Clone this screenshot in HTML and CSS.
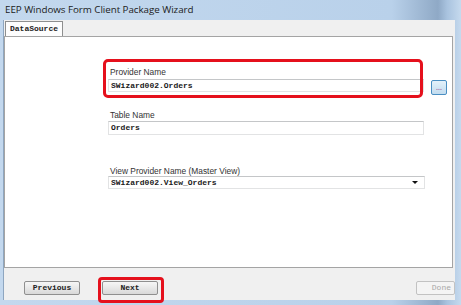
FILE: index.html
```html
<!DOCTYPE html>
<html lang="en">
<head>
    <meta charset="UTF-8">
    <title>EEP Windows Form Client Package Wizard</title>
    <link rel="stylesheet" href="styles.css">
</head>
<body>
    <div class="window">
        <div class="titlebar">EEP Windows Form Client Package Wizard</div>

        <div class="client">
            <div class="tabs">
                <div class="tab">DataSource</div>
            </div>

            <div class="panel">
                <div class="fields">
                    <div class="group marked">
                        <label class="caption">Provider Name</label>
                        <div class="row">
                            <div class="textbox">SWizard002.Orders</div>
                            <button class="browse">...</button>
                        </div>
                    </div>

                    <div class="group table-group">
                        <label class="caption">Table Name</label>
                        <div class="textbox tall">Orders</div>
                    </div>

                    <div class="group view-group">
                        <label class="caption">View Provider Name (Master View)</label>
                        <div class="textbox combo">
                            <span>SWizard002.View_Orders</span>
                            <span class="arrow"></span>
                        </div>
                    </div>
                </div>
            </div>

            <div class="footer">
                <button class="btn">Previous</button>
                <button class="btn next">Next</button>
                <span class="spacer"></span>
                <button class="btn" disabled>Done</button>
            </div>
        </div>
    </div>
</body>
</html>
```

FILE: styles.css
```css
body {
    margin: 0;
    width: 461px;
    height: 305px;
    overflow: hidden;
    font-family: "Liberation Sans", Arial, sans-serif;
}
.window {
    box-sizing: border-box;
    width: 461px;
    height: 305px;
    padding: 0 6px 5px 4px;
    display: flex;
    flex-direction: column;
    background: linear-gradient(90deg, #c3d8ee 0%, #b9d1ea 85%, #8fa9c6 95%, #a9c3df 97%, #c6daee 100%);
}
.titlebar {
    height: 20px;
    line-height: 19px;
    padding-left: 1px;
    font-family: "Open Sans", "Noto Sans", sans-serif;
    font-size: 9.8px;
    color: #1b1b1b;
    letter-spacing: -0.05px;
}
.client {
    flex: 1;
    display: flex;
    flex-direction: column;
    background: #f0f0f0;
    border-left: 1px solid #8ea6c0;
    margin-left: -1px;
}
.tabs {
    height: 15px;
    padding: 1px 0 0 1px;
    display: flex;
}
.tab {
    width: 56px;
    height: 14px;
    line-height: 13px;
    text-align: center;
    background: #fdfdfd;
    border: 1px solid #8e8f8f;
    border-bottom: none;
    font-family: "Liberation Mono", monospace;
    font-size: 8px;
    font-weight: bold;
    color: #222;
    position: relative;
    z-index: 1;
}
.panel {
    height: 230px;
    background: #fff;
    border: 1px solid #a4a4a4;
    margin-right: 2px;
}
.fields {
    margin-left: 103px;
    padding-top: 30px;
    width: 316px;
}
.group {
    display: flex;
    flex-direction: column;
}
.caption {
    height: 10px;
    line-height: 10px;
    padding-left: 2px;
    font-size: 8.4px;
    color: #333;
    margin-bottom: 2px;
}
.row {
    display: flex;
    align-items: flex-start;
}
.textbox {
    box-sizing: border-box;
    width: 316px;
    height: 13px;
    line-height: 11px;
    padding-left: 2px;
    border: 1px solid #e2e3e4;
    border-top-color: #c4c6c8;
    font-family: "Liberation Mono", monospace;
    font-size: 8px;
    font-weight: bold;
    color: #1a1a1a;
    flex-shrink: 0;
}
.textbox.tall {
    height: 14px;
    line-height: 12px;
}
.table-group {
    margin-top: 15px;
}
.table-group .caption {
    margin-bottom: 1px;
}
.view-group {
    margin-top: 31px;
}
.view-group .caption {
    margin-bottom: 0;
}
.combo {
    width: 317px;
    display: flex;
    justify-content: space-between;
    align-items: center;
    padding-right: 6px;
}
.arrow {
    width: 0;
    height: 0;
    border-left: 3px solid transparent;
    border-right: 3px solid transparent;
    border-top: 3px solid #111;
}
.marked {
    position: relative;
}
.marked::after {
    content: "";
    position: absolute;
    left: -5px;
    top: -8px;
    width: 320px;
    height: 39px;
    box-sizing: border-box;
    border: 3px solid #e5101c;
    border-radius: 5px;
}
.browse {
    box-sizing: border-box;
    flex-shrink: 0;
    margin: 1px 0 0 7px;
    width: 16px;
    height: 15px;
    padding: 0;
    border: 1px solid #4a8ec2;
    border-radius: 2px;
    background: linear-gradient(#e4f1fa, #c2dcef);
    font-family: "Liberation Sans", sans-serif;
    font-size: 7px;
    font-weight: bold;
    line-height: 11px;
    color: #a878a6;
    overflow: hidden;
}
.footer {
    flex: 1;
    display: flex;
    align-items: flex-start;
    padding: 13px 0 0 20px;
}
.btn {
    box-sizing: border-box;
    width: 56px;
    height: 14px;
    padding: 0;
    border: 1px solid #8f8f8f;
    border-radius: 2px;
    background: linear-gradient(#f6f6f6 0%, #e8e8e8 50%, #d9d9d9 100%);
    font-family: "Liberation Mono", monospace;
    font-size: 8px;
    font-weight: bold;
    color: #222;
    line-height: 12px;
}
.next {
    margin-left: 22px;
    position: relative;
}
.next::after {
    content: "";
    position: absolute;
    left: -5px;
    top: -5px;
    width: 66px;
    height: 26px;
    box-sizing: border-box;
    border: 3px solid #e5101c;
    border-radius: 4px;
}
.spacer {
    flex: 1;
}
.btn:disabled {
    width: 39px;
    border-color: #c2c2c2;
    background: #f4f4f4;
    color: #a8a8a8;
    font-weight: normal;
    text-align: right;
    padding-right: 3px;
}
```
